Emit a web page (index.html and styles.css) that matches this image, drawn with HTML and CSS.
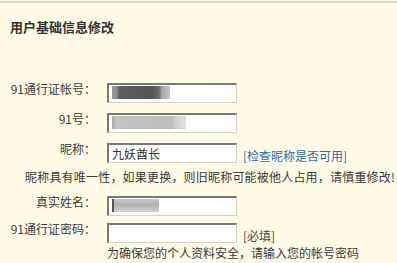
FILE: index.html
```html
<!DOCTYPE html>
<html lang="zh-CN">
<head>
  <meta charset="UTF-8" />
  <title>用户基础信息修改</title>
  <link rel="stylesheet" href="styles.css">
</head>
<body>
  <div class="box">
    <h2 class="title">用户基础信息修改</h2>

    <form class="form">
      <div class="row">
        <label class="label">91通行证帐号：</label>
        <div class="field"><span class="mask mask-dark"></span></div>
      </div>

      <div class="row">
        <label class="label">91号：</label>
        <div class="field"><span class="mask mask-light"></span></div>
      </div>

      <div class="row row-nick">
        <label class="label">昵称：</label>
        <div class="field">九妖酋长</div>
        <a class="tip link" href="#">[检查昵称是否可用]</a>
      </div>

      <p class="note">昵称具有唯一性，如果更换，则旧昵称可能被他人占用，请慎重修改!</p>

      <div class="row row-name">
        <label class="label">真实姓名：</label>
        <div class="field"><span class="mask mask-short"></span></div>
      </div>

      <div class="row row-pwd">
        <label class="label">91通行证密码：</label>
        <div class="col">
          <div class="line">
            <div class="field"></div>
            <span class="tip">[必填]</span>
          </div>
          <p class="hint">为确保您的个人资料安全，请输入您的帐号密码</p>
        </div>
      </div>
    </form>
  </div>
</body>
</html>
```

FILE: styles.css
```css
* {
  margin: 0;
  padding: 0;
  box-sizing: border-box;
}

body {
  background: #fffbe7;
  font-family: "Noto Sans CJK SC", "DejaVu Sans", sans-serif;
  font-size: 12px;
  color: #3a3a3a;
  padding-top: 1px;
}

.box {
  border-top: 2px solid #dad6c6;
  height: 262px;
  overflow: hidden;
}

.title {
  margin: 15px 0 0 10px;
  font-size: 13px;
  line-height: 18px;
  font-weight: bold;
  color: #333;
}

.form {
  margin-top: 47px;
}

.row {
  display: flex;
  align-items: flex-start;
  margin-bottom: 10px;
}

.label {
  width: 107px;
  padding-right: 11px;
  text-align: right;
  line-height: 12px;
  white-space: nowrap;
}

.field {
  width: 130px;
  height: 20px;
  background: #fff;
  border-top: 2px solid #787878;
  border-left: 2px solid #787878;
  border-right: 1px solid #d6d2c2;
  border-bottom: 1px solid #d6d2c2;
  padding: 1px 0 0 3px;
  line-height: 15px;
  font-size: 12px;
  color: #333;
}

.mask {
  display: block;
  height: 13px;
}

.mask-dark {
  width: 58px;
  background: linear-gradient(90deg, #9a9a9a 0, #8a8a8a 5px, #5e5e5e 7px, #555 40px, #6a6a6a 47px, #a8a8a8 50px, #c8c8c8 58px);
}

.mask-light {
  width: 74px;
  background: linear-gradient(90deg, #a8a8a8 0, #c2c2c2 4px, #bdbdbd 60px, #cfcfcf 64px, #e2e2e2 74px);
}

.mask-short {
  width: 47px;
  background: linear-gradient(180deg, #c8c8c8 0, #b0b0b0 6px, #d4d4d4 13px);
  border-left: 2px solid #555;
}

.tip {
  align-self: flex-end;
  margin: 0 0 1px 6px;
  line-height: 13px;
  color: #444;
}

.link {
  color: #2f6ea8;
  text-decoration: none;
}

.row-nick {
  margin-bottom: 0;
}

.note {
  margin: 7px 0 12px 25px;
  line-height: 14px;
  letter-spacing: 0.2px;
  white-space: nowrap;
}

.row-name {
  margin-bottom: 7px;
}

.line {
  display: flex;
}

.hint {
  margin-top: 3px;
  line-height: 13px;
  white-space: nowrap;
}
```
